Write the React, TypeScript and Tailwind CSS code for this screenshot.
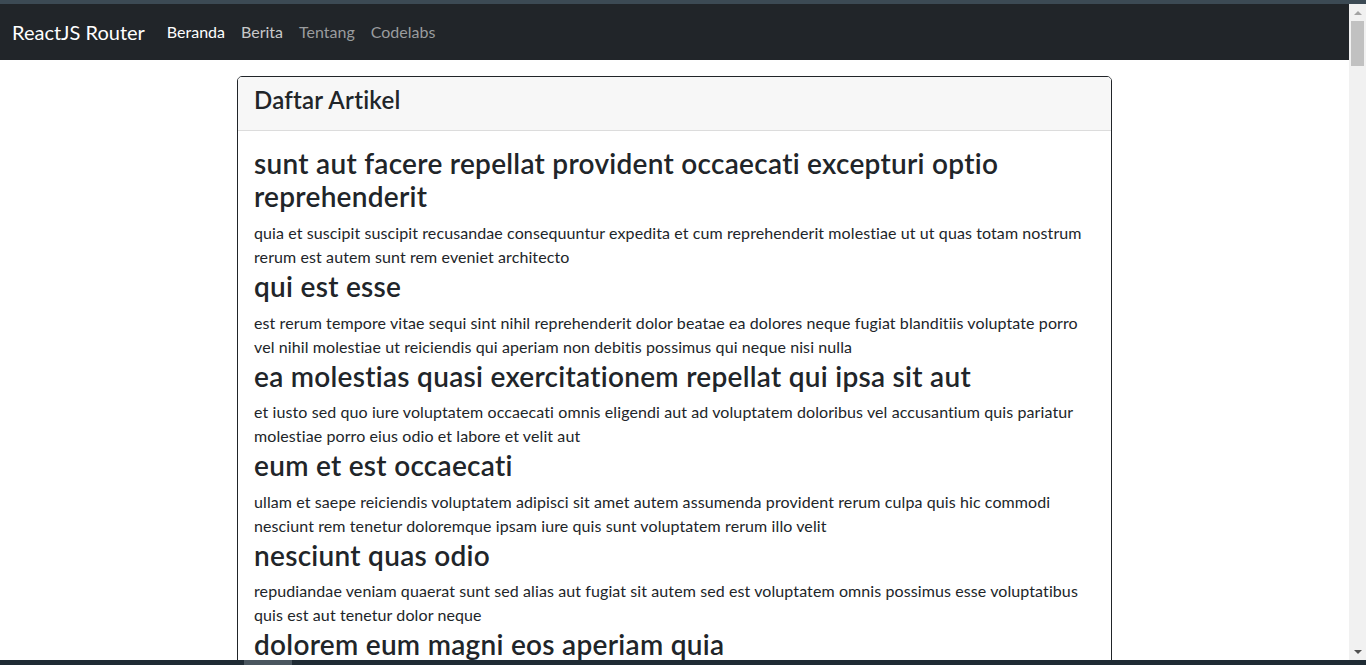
const posts = [
  {
    id: 1,
    title: 'sunt aut facere repellat provident occaecati excepturi optio reprehenderit',
    body: 'quia et suscipit suscipit recusandae consequuntur expedita et cum reprehenderit molestiae ut ut quas totam nostrum rerum est autem sunt rem eveniet architecto',
  },
  {
    id: 2,
    title: 'qui est esse',
    body: 'est rerum tempore vitae sequi sint nihil reprehenderit dolor beatae ea dolores neque fugiat blanditiis voluptate porro vel nihil molestiae ut reiciendis qui aperiam non debitis possimus qui neque nisi nulla',
  },
  {
    id: 3,
    title: 'ea molestias quasi exercitationem repellat qui ipsa sit aut',
    body: 'et iusto sed quo iure voluptatem occaecati omnis eligendi aut ad voluptatem doloribus vel accusantium quis pariatur molestiae porro eius odio et labore et velit aut',
  },
  {
    id: 4,
    title: 'eum et est occaecati',
    body: 'ullam et saepe reiciendis voluptatem adipisci sit amet autem assumenda provident rerum culpa quis hic commodi nesciunt rem tenetur doloremque ipsam iure quis sunt voluptatem rerum illo velit',
  },
  {
    id: 5,
    title: 'nesciunt quas odio',
    body: 'repudiandae veniam quaerat sunt sed alias aut fugiat sit autem sed est voluptatem omnis possimus esse voluptatibus quis est aut tenetur dolor neque',
  },
  {
    id: 6,
    title: 'dolorem eum magni eos aperiam quia',
    body: 'ut aspernatur corporis harum nihil quis provident sequi mollitia nobis aliquid molestiae perspiciatis et ea nemo ab reprehenderit accusantium quas voluptate dolores velit et doloremque molestiae',
  },
  {
    id: 7,
    title: 'magnam facilis autem',
    body: 'dolore placeat quibusdam ea quo vitae magni quis enim qui quis quo nemo aut saepe quidem repellat excepturi ut quia sunt ut sequi eos ea sed quas',
  },
];

const App = () => {
  return (
    <div
      className="h-[665px] w-full overflow-hidden flex flex-col bg-white text-[#212529]"
      style={{ fontFamily: 'Lato, "Open Sans", sans-serif' }}
    >
      <div className="h-1 shrink-0 bg-[#3c4a54]" />

      <div className="flex flex-1 min-h-0">
        <div className="flex-1 min-w-0 overflow-hidden">
          <nav className="h-14 bg-[#212529] flex items-center px-3">
            <span className="text-xl text-white mr-[14px]">ReactJS Router</span>
            <ul className="flex items-center">
              <li className="px-2 text-white">Beranda</li>
              <li className="px-2 text-[#c8c9ca]">Berita</li>
              <li className="px-2 text-[#9a9c9e]">Tentang</li>
              <li className="px-2 text-[#9a9c9e]">Codelabs</li>
            </ul>
          </nav>

          <main className="pt-4">
            <div className="w-[875px] mx-auto border border-[#212529] rounded-[5px] overflow-hidden">
              <div className="bg-[#f7f7f7] border-b border-[#dcdcdc] px-4 pt-[9px] pb-[7px]">
                <h4 className="text-2xl leading-[1.2] font-semibold mb-2 tracking-[0.01em]">Daftar Artikel</h4>
              </div>
              <div className="p-4">
                {posts.map((post) => (
                  <div key={post.id}>
                    <h3 className="text-[28px] leading-[1.2] font-semibold mb-2 tracking-[0.01em]">{post.title}</h3>
                    <p className="text-base leading-6 -mt-px mb-px tracking-[0.006em]">{post.body}</p>
                  </div>
                ))}
              </div>
            </div>
          </main>
        </div>

        {/* fake browser scrollbar */}
        <div className="w-[17px] shrink-0 bg-[#f1f1f1] flex flex-col items-center">
          <div className="h-[17px] flex items-center justify-center">
            <div className="w-0 h-0 border-l-[4px] border-r-[4px] border-b-[4px] border-l-transparent border-r-transparent border-b-[#a3a3a3]" />
          </div>
          <div className="w-[13px] h-[45px] bg-[#c1c1c1]" />
          <div className="flex-1" />
          <div className="h-[17px] flex items-center justify-center">
            <div className="w-0 h-0 border-l-[4px] border-r-[4px] border-t-[4px] border-l-transparent border-r-transparent border-t-[#505050]" />
          </div>
        </div>
      </div>

      <div className="h-[5px] shrink-0 bg-[#1f2b34] flex">
        <div className="w-[244px]" />
        <div className="w-[48px] bg-[#4a565f]" />
      </div>
    </div>
  );
};

export default App;
